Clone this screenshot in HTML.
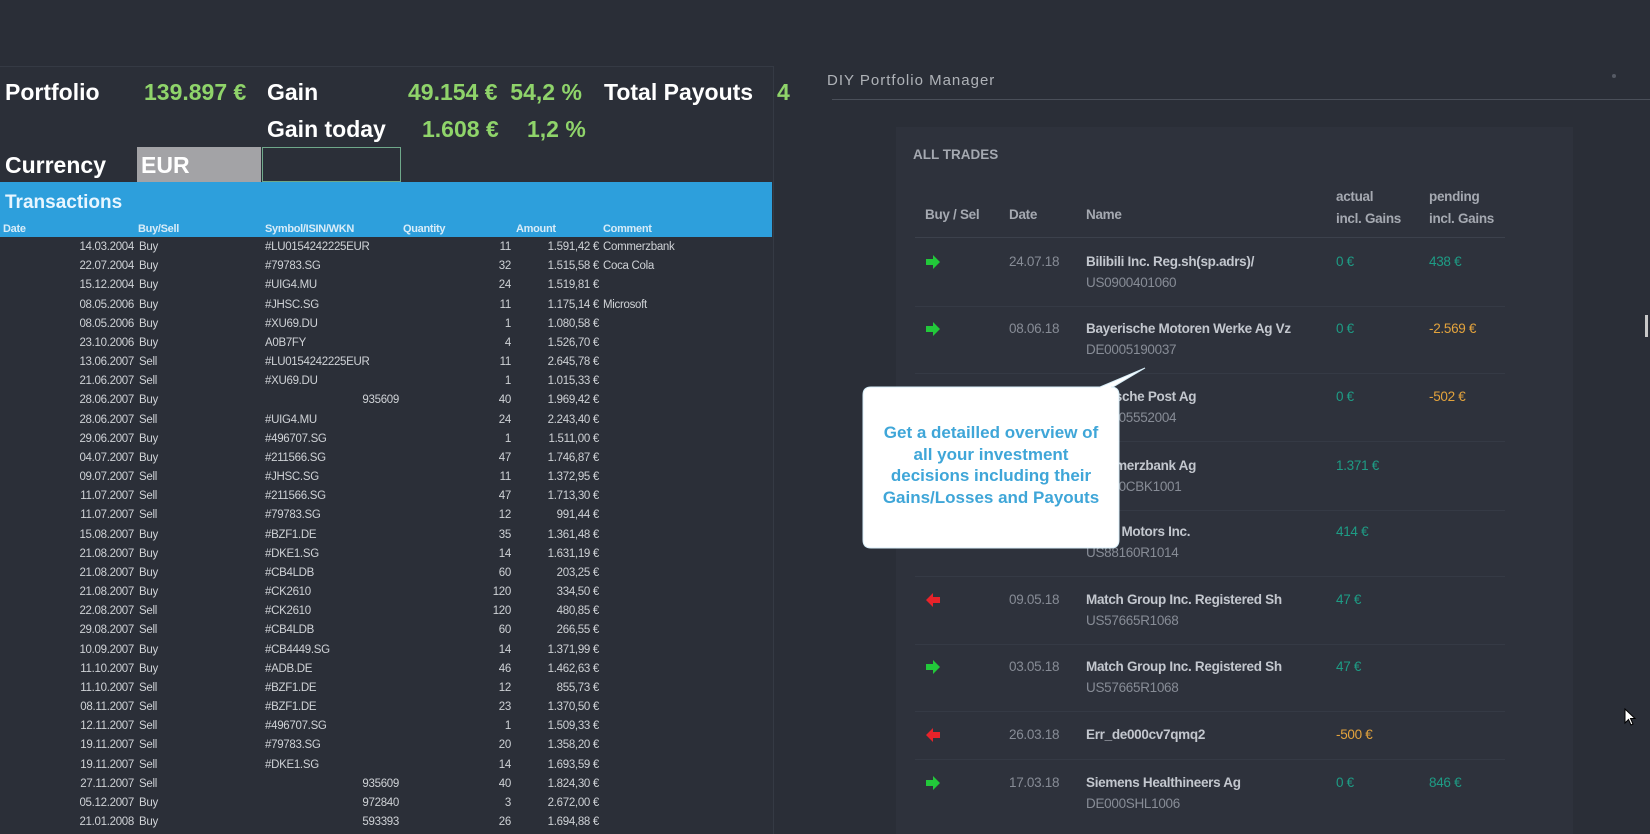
<!DOCTYPE html>
<html><head><meta charset="utf-8"><style>
*{margin:0;padding:0;box-sizing:border-box}
body{width:1650px;height:834px;overflow:hidden;background:#2a2e37;font-family:"Liberation Sans",sans-serif;position:relative}
.a{position:absolute;white-space:nowrap}
.big{font-size:23px;font-weight:bold;color:#fff;line-height:1}
.g{color:#8fd46a}
.t{font-size:11.5px;color:#cfd2d6;letter-spacing:-0.3px;line-height:1}
.th{font-size:11px;color:#d8ecf8;font-weight:bold;letter-spacing:-0.3px}
.r{text-align:right}
.rp{font-size:13.5px;line-height:1;letter-spacing:-0.3px}
.nm{color:#c3c7ce;font-weight:bold}
.dt{color:#878c96}
.tl{color:#1e9c85}
.or{color:#e3a33c}
.sep{position:absolute;left:915px;width:590px;height:1px;background:#353a45}
</style></head><body>
<div class="a" style="left:0;top:66px;width:774px;height:768px;background:#2b2f38;border-right:1px solid #353a44;border-top:1px solid #353a44"></div>
<div class="a big" style="left:5px;top:81px">Portfolio</div>
<div class="a big g" style="left:144px;top:81px">139.897 €</div>
<div class="a big" style="left:267px;top:81px">Gain</div>
<div class="a big g" style="left:408px;top:81px">49.154 €&nbsp;&nbsp;54,2 %</div>
<div class="a big" style="left:604px;top:81px">Total Payouts</div>
<div class="a big g" style="left:777px;top:81px">4</div>
<div class="a big" style="left:267px;top:118px">Gain today</div>
<div class="a big g" style="left:422px;top:118px">1.608 €</div>
<div class="a big g" style="left:527px;top:118px">1,2 %</div>
<div class="a big" style="left:5px;top:154px">Currency</div>
<div class="a" style="left:137px;top:147px;width:124px;height:35px;background:#a3a3a6"></div>
<div class="a big" style="left:141px;top:154px">EUR</div>
<div class="a" style="left:262px;top:147px;width:139px;height:35px;border:1px solid #6fa88a"></div>
<div class="a" style="left:0;top:182px;width:772px;height:55px;background:#2d9fdc"></div>
<div class="a" style="left:5px;top:192px;font-size:19px;font-weight:bold;color:#e8f6ff">Transactions</div>
<div class="a th" style="left:3px;top:223px">Date</div>
<div class="a th" style="left:138px;top:223px">Buy/Sell</div>
<div class="a th" style="left:265px;top:223px">Symbol/ISIN/WKN</div>
<div class="a th" style="left:403px;top:223px">Quantity</div>
<div class="a th" style="left:516px;top:223px">Amount</div>
<div class="a th" style="left:603px;top:223px">Comment</div>
<div id="rows"></div>
<div class="a" style="left:827px;top:72px;font-size:15px;color:#d0d3d8;letter-spacing:1px;opacity:.8">DIY Portfolio Manager</div>
<div class="a" style="left:1612px;top:74px;width:4px;height:4px;border-radius:2px;background:#555a64"></div>
<div class="a" style="left:832px;top:99px;width:818px;height:1px;background:#4a4f59"></div>
<div class="a" style="left:896px;top:127px;width:677px;height:707px;background:#2e323c"></div>
<div class="a" style="left:913px;top:147px;font-size:13.5px;font-weight:bold;color:#a5a9b1">ALL TRADES</div>
<div class="a rp nm" style="left:925px;top:208px;color:#a5a9b1">Buy / Sel</div>
<div class="a rp nm" style="left:1009px;top:208px;color:#a5a9b1">Date</div>
<div class="a rp nm" style="left:1086px;top:208px;color:#a5a9b1">Name</div>
<div class="a rp nm" style="left:1336px;top:186px;color:#a5a9b1;line-height:22px">actual<br>incl. Gains</div>
<div class="a rp nm" style="left:1429px;top:186px;color:#a5a9b1;line-height:22px">pending<br>incl. Gains</div>
<div class="sep" style="top:237px;background:#3c414c"></div>
<div id="trades"></div>
<svg class="a" style="left:855px;top:360px" width="300" height="200">
<path d="M18 27 H245 L290 8 L258 27 H256 Q264 27 264 35 V180 Q264 188 256 188 H16 Q8 188 8 180 V35 Q8 27 16 27 Z" fill="#fff" stroke="#d8eef8" stroke-width="1"/>
</svg>
<div class="a" style="left:863px;top:422px;width:256px;text-align:center;font-size:17px;font-weight:bold;color:#3fa6d8;line-height:21.5px">Get a detailled overview of<br>all your investment<br>decisions including their<br>Gains/Losses and Payouts</div>
<div class="a" style="left:1645px;top:315px;width:3px;height:22px;background:#c8c8c8"></div>
<svg class="a" style="left:1624px;top:708px" width="14" height="20"><path d="M1 1 V15 L4.5 11.5 L7 17 L9 16 L6.5 10.5 H11 Z" fill="#fff" stroke="#000" stroke-width="1"/></svg>
<script>
var d=[["14.03.2004","Buy","#LU0154242225EUR","","11","1.591,42 €","Commerzbank"],["22.07.2004","Buy","#79783.SG","","32","1.515,58 €","Coca Cola"],["15.12.2004","Buy","#UIG4.MU","","24","1.519,81 €",""],["08.05.2006","Buy","#JHSC.SG","","11","1.175,14 €","Microsoft"],["08.05.2006","Buy","#XU69.DU","","1","1.080,58 €",""],["23.10.2006","Buy","A0B7FY","","4","1.526,70 €",""],["13.06.2007","Sell","#LU0154242225EUR","","11","2.645,78 €",""],["21.06.2007","Sell","#XU69.DU","","1","1.015,33 €",""],["28.06.2007","Buy","","935609","40","1.969,42 €",""],["28.06.2007","Sell","#UIG4.MU","","24","2.243,40 €",""],["29.06.2007","Buy","#496707.SG","","1","1.511,00 €",""],["04.07.2007","Buy","#211566.SG","","47","1.746,87 €",""],["09.07.2007","Sell","#JHSC.SG","","11","1.372,95 €",""],["11.07.2007","Sell","#211566.SG","","47","1.713,30 €",""],["11.07.2007","Sell","#79783.SG","","12","991,44 €",""],["15.08.2007","Buy","#BZF1.DE","","35","1.361,48 €",""],["21.08.2007","Buy","#DKE1.SG","","14","1.631,19 €",""],["21.08.2007","Buy","#CB4LDB","","60","203,25 €",""],["21.08.2007","Buy","#CK2610","","120","334,50 €",""],["22.08.2007","Sell","#CK2610","","120","480,85 €",""],["29.08.2007","Sell","#CB4LDB","","60","266,55 €",""],["10.09.2007","Buy","#CB4449.SG","","14","1.371,99 €",""],["11.10.2007","Buy","#ADB.DE","","46","1.462,63 €",""],["11.10.2007","Sell","#BZF1.DE","","12","855,73 €",""],["08.11.2007","Sell","#BZF1.DE","","23","1.370,50 €",""],["12.11.2007","Sell","#496707.SG","","1","1.509,33 €",""],["19.11.2007","Sell","#79783.SG","","20","1.358,20 €",""],["19.11.2007","Sell","#DKE1.SG","","14","1.693,59 €",""],["27.11.2007","Sell","","935609","40","1.824,30 €",""],["05.12.2007","Buy","","972840","3","2.672,00 €",""],["21.01.2008","Buy","","593393","26","1.694,88 €",""]];
var h="";d.forEach(function(r,i){var y=242+i*19.17;
h+='<div class="a t r" style="left:40px;width:94px;top:'+y+'px">'+r[0]+'</div><div class="a t" style="left:139px;top:'+y+'px">'+r[1]+'</div><div class="a t" style="left:265px;top:'+y+'px">'+r[2]+'</div><div class="a t r" style="left:320px;width:79px;top:'+y+'px">'+r[3]+'</div><div class="a t r" style="left:450px;width:61px;top:'+y+'px">'+r[4]+'</div><div class="a t r" style="left:500px;width:99px;top:'+y+'px">'+r[5]+'</div><div class="a t" style="left:603px;top:'+y+'px">'+r[6]+'</div>';});
document.getElementById("rows").innerHTML=h;
var T=[[262,"g","24.07.18","Bilibili Inc. Reg.sh(sp.adrs)/","US0900401060","0 €","tl","438 €","tl"],[329,"g","08.06.18","Bayerische Motoren Werke Ag Vz","DE0005190037","0 €","tl","-2.569 €","or"],[397,"g","04.06.18","Deutsche Post Ag","DE0005552004","0 €","tl","-502 €","or"],[466,"g","22.05.18","Commerzbank Ag","DE000CBK1001","1.371 €","tl","",""],[532,"g","18.05.18","Tesla Motors Inc.","US88160R1014","414 €","tl","",""],[600,"r","09.05.18","Match Group Inc. Registered Sh","US57665R1068","47 €","tl","",""],[667,"g","03.05.18","Match Group Inc. Registered Sh","US57665R1068","47 €","tl","",""],[735,"r","26.03.18","Err_de000cv7qmq2","","-500 €","or","",""],[783,"g","17.03.18","Siemens Healthineers Ag","DE000SHL1006","0 €","tl","846 €","tl"]];
var s="";T.forEach(function(r,i){var y=r[0]-7;
var col=r[1]=="g"?"#22c83a":"#e8232a";
var ar=r[1]=="g"?'<path d="M1 5 H8 V1 L15 8 L8 15 V11 H1 Z" fill="'+col+'"/>':'<path d="M15 5 H8 V1 L1 8 L8 15 V11 H15 Z" fill="'+col+'"/>';
s+='<svg class="a" style="left:925px;top:'+(y-1)+'px" width="16" height="16">'+ar+'</svg>';
s+='<div class="a rp dt" style="left:1009px;top:'+y+'px">'+r[2]+'</div><div class="a rp nm" style="left:1086px;top:'+y+'px">'+r[3]+'</div><div class="a rp dt" style="left:1086px;top:'+(y+21)+'px">'+r[4]+'</div><div class="a rp '+r[6]+'" style="left:1336px;top:'+y+'px">'+r[5]+'</div><div class="a rp '+r[8]+'" style="left:1429px;top:'+y+'px">'+r[7]+'</div>';
if(i<8)s+='<div class="sep" style="top:'+(i==7?r[0]+24:r[0]+44)+'px"></div>';});
document.getElementById("trades").innerHTML=s;
</script>
</body></html>
